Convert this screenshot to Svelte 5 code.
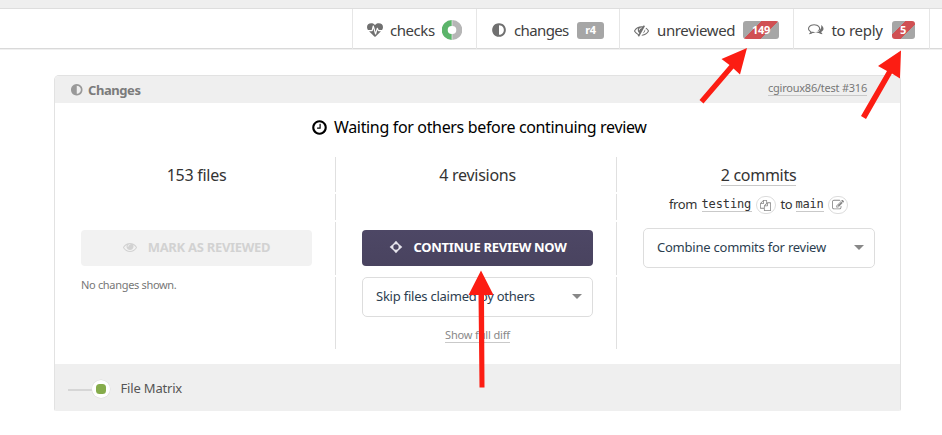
<script>
  const circle = 'M1664 896q0 209-103 385.5t-279.500 279.500-385.500 103-385.500-103-279.500-279.500-103-385.500 103-385.500 279.500-279.500 385.500-103 385.500 103 279.500 279.500 103 385.500z';
  const icons = {
    heartbeat: 'M1280 1024h305q-5 6-10 10.5t-9 7.500l-3 4-623 600q-18 18-44 18t-44-18l-624-602q-5-2-21-20h369q22 0 39.500-13.500t22.500-34.500l70-281 190 667q6 20 23 33t39 13q21 0 38-13t23-33l146-485 56 112q18 35 57 35zM1792 596q0 145-103 300h-369l-111-221q-8-17-25.500-27t-36.500-8q-45 5-56 46l-129 430-196-686q-6-20-23.500-33t-39.500-13-39 13.500-22 34.500l-116 464h-423q-103-155-103-300 0-220 127-344t351-124q62 0 126.500 21.500t120 58 95.500 68.500 76 68q36-36 76-68t95.500-68.500 120-58 126.500-21.500q224 0 351 124t127 344z',
    adjust: 'M896 1440v-1088q148 0 273 73t198 198 73 273-73 273-198 198-273 73z' + circle,
    clock: 'M1024 544v448q0 14-9 23t-23 9h-320q-14 0-23-9t-9-23v-64q0-14 9-23t23-9h224v-352q0-14 9-23t23-9h64q14 0 23 9t9 23zM1440 896q0-148-73-273t-198-198-273-73-273 73-198 198-73 273 73 273 198 198 273 73 273-73 198-198 73-273z' + circle,
    eye: 'M1664 960q-152-236-381-353 61 104 61 225 0 185-131.500 316.500t-316.500 131.500-316.500-131.500-131.500-316.500q0-121 61-225-229 117-381 353 133 205 333.500 326.500t434.500 121.500 434.500-121.500 333.500-326.500zM944 576q0-20-14-34t-34-14q-125 0-214.500 89.500t-89.500 214.500q0 20 14 34t34 14 34-14 14-34q0-86 61-147t147-61q20 0 34-14t14-34zM1792 960q0 34-20 69-140 230-376.500 368.500t-499.500 138.500-499.500-139-376.500-368q-20-35-20-69t20-69q140-229 376.500-368t499.500-139 499.500 139 376.500 368q20 35 20 69z',
    eyeSlash: 'M555 1335l78-141q-87-63-136-159t-49-203q0-121 61-225-229 117-381 353 167 258 427 375zM944 576q0-20-14-34t-34-14q-125 0-214.500 89.500t-89.500 214.500q0 20 14 34t34 14 34-14 14-34q0-86 61-147t147-61q20 0 34-14t14-34zM1307 377q0 7-1 9-106 189-316 567t-315 566l-49 89q-10 16-28 16-12 0-134-70-16-10-16-28 0-12 44-87-143-65-263.500-173t-208.500-245q-20-31-20-69t20-69q153-235 380-371t496-136q89 0 180 17l54-97q10-16 28-16 5 0 18 6t31 15.500 33 18.500 31.500 18.500 19.500 11.500q16 10 16 27zM1344 832q0 139-79 253.500t-209 164.500l280-502q8 45 8 84zM1792 960q0 35-20 69-39 64-109 145-150 172-347.500 267t-419.500 95l74-132q212-18 392.500-137t301.500-307q-115-179-282-294l63-112q95 64 182.500 153t144.500 184q20 34 20 69z',
    comments: 'M704 384q-153 0-286 52t-211.500 141-78.500 191q0 82 53 158t149 132l97 56-35 84q34-20 62-39l44-31 53 10q78 14 153 14 153 0 286-52t211.500-141 78.500-191-78.500-191-211.500-141-286-52zM704 256q191 0 353.500 68.500t256.500 186.500 94 257-94 257-256.500 186.500-353.500 68.500q-86 0-176-16-124 88-278 128-36 9-86 16h-3q-11 0-20.500-8t-11.500-21q-1-3-1-6.500t.5-6.500 2-6l2.500-5 3.500-5.500 4-5 4.500-5 4-4.500q5-6 23-25t26-29.500 22.500-29 25-38.500 20.500-44q-124-72-195-177t-71-224q0-139 94-257t256.500-186.500 353.500-68.500zM1526 1169q10 24 20.500 44t25 38.500 22.500 29 26 29.500 23 25q1 1 4 4.500t4.500 5 4 5 3.500 5.500l2.500 5 2 6 .5 6.500-1 6.500q-3 14-13 22t-22 7q-50-7-86-16-154-40-278-128-90 16-176 16-271 0-472-132 58 4 88 4 161 0 309-45t264-129q125-92 192-212t67-254q0-77-23-152 129 71 204 178t75 230q0 120-71 224.500t-195 176.500z',
    copy: 'M1696 384q40 0 68 28t28 68v1216q0 40-28 68t-68 28h-960q-40 0-68-28t-28-68v-288h-544q-40 0-68-28t-28-68v-672q0-40 20-88t48-76l408-408q28-28 76-48t88-20h416q40 0 68 28t28 68v328q68-40 128-40h416zM1152 597l-299 299h299v-299zM512 213l-299 299h299v-299zM708 860l316-316v-416h-384v416q0 40-28 68t-68 28h-416v640h512v-256q0-40 20-88t48-76zM1664 1664v-1152h-384v416q0 40-28 68t-68 28h-416v640h896z',
    edit: 'M888 1184l116-116-152-152-116 116v56h96v96h56zM1328 464q-16-16-33 1l-350 350q-17 17-1 33t33-1l350-350q17-17 1-33zM1408 1058v190q0 119-84.500 203.500t-203.500 84.500h-832q-119 0-203.500-84.500t-84.500-203.500v-832q0-119 84.500-203.500t203.500-84.500h832q63 0 117 25 15 7 18 23 3 17-9 29l-49 49q-14 14-32 8-23-6-45-6h-832q-66 0-113 47t-47 113v832q0 66 47 113t113 47h832q66 0 113-47t47-113v-126q0-13 9-22l64-64q15-15 35-7t20 29zM1312 320l288 288-672 672h-288v-288zM1756 452l-92 92-288-288 92-92q28-28 68-28t68 28l152 152q28 28 28 68t-28 68z'
  };
  const arrows = [
    '747,48 740,74.500 733.500,68.500 703.500,103.500 699.500,100 729.500,65 721.500,59',
    '901,50.500 900,78.500 892,73.500 866,119 861,116 887,71 878,66',
    '481,270.500 493.500,295 484,295 484.500,387.500 479.500,387.500 478.500,295 468.500,295'
  ];
</script>

{#snippet icon(name, size)}
  <svg class="icon" width={size} height={size} viewBox="0 0 1792 1792"><path fill-rule="evenodd" d={icons[name]} /></svg>
{/snippet}

<div class="page">
  <div class="strip"></div>
  <nav>
    <div class="tab checks">
      {@render icon('heartbeat', 16)}<span class="label">checks</span>
      <svg class="donut" width="20" height="20" viewBox="0 0 20 20">
        <path fill="#5bb46a" d="M9.700 0A10 10 0 0 0 9.700 20V14A4 4 0 0 1 9.700 6z" />
        <path fill="#b6b6b6" d="M10.300 0A10 10 0 0 1 10.300 20V14A4 4 0 0 0 10.300 6z" />
      </svg>
    </div>
    <div class="tab changes">{@render icon('adjust', 16)}<span class="label">changes</span><span class="badge">r4</span></div>
    <div class="tab unreviewed">{@render icon('eyeSlash', 15)}<span class="label">unreviewed</span><span class="badge split">149</span></div>
    <div class="tab reply">{@render icon('comments', 15.5)}<span class="label">to reply</span><span class="badge split">5</span></div>
    <div class="tab end"></div>
  </nav>

  <section class="panel">
    <header>
      <div class="title">{@render icon('adjust', 13.5)}<b>Changes</b></div>
      <span class="link repo">cgiroux86/test #316</span>
    </header>
    <div class="status">{@render icon('clock', 17)}<span>Waiting for others before continuing review</span></div>
    <div class="grid">
      <div class="cell head"><span>153 files</span></div>
      <div class="cell head"><span>4 revisions</span></div>
      <div class="cell head"><span class="link">2 commits</span></div>

      <div class="cell"></div>
      <div class="cell"></div>
      <div class="cell branches">
        <span class="from">from</span><span class="link mono">testing</span><span class="pill">{@render icon('copy', 11)}</span>
        <span class="to">to</span><span class="link mono main">main</span><span class="pill">{@render icon('edit', 12)}</span>
      </div>

      <div class="cell action"><div class="button off">{@render icon('eye', 14)}<span>MARK AS REVIEWED</span></div></div>
      <div class="cell action">
        <div class="button">
          <svg class="icon" width="14" height="14" viewBox="0 0 14 14">
            <circle cx="7" cy="7" r="3.500" fill="none" stroke="currentColor" stroke-width="1.700" />
            <path d="M7 .7L9.200 3.300H4.800zM7 13.300L9.200 10.700H4.800zM.7 7L3.300 4.800V9.200zM13.300 7L10.700 4.800V9.200z" />
          </svg><span>CONTINUE REVIEW NOW</span>
        </div>
      </div>
      <div class="cell action combine"><div class="select"><span>Combine commits for review</span><i></i></div></div>

      <div class="cell last"><div class="note">No changes shown.</div></div>
      <div class="cell last">
        <div class="select"><span>Skip files claimed by others</span><i></i></div>
        <div class="diff"><span class="link">Show full diff</span></div>
      </div>
      <div class="cell last"></div>
    </div>
    <footer><span class="line"></span><span class="node"></span><span class="matrix">File Matrix</span></footer>
  </section>

  <svg class="arrows" width="942" height="435" viewBox="0 0 942 435">
    {#each arrows as points}<polygon {points} />{/each}
  </svg>
</div>

<style>
  :global(body) { margin: 0; background: #fff; }
  .page { position: relative; box-sizing: border-box; width: 942px; height: 435px; overflow: hidden; background: #fff; font-family: "Noto Sans", sans-serif; color: #333; white-space: nowrap; }
  .page *, .page *::before { box-sizing: border-box; }
  .icon { flex: none; display: block; fill: currentColor; }
  .strip { height: 9px; background: #efefef; border-bottom: 1px solid #dedede; }
  nav { display: flex; height: 40px; padding-left: 352px; border-bottom: 1px solid #d9d9d9; box-shadow: 0 1px 0 #f0f0f0; }
  .tab { display: flex; flex: none; align-items: center; height: 40px; border-left: 1px solid #e6e6e6; padding: 2px 0 0 14px; color: #707070; font-size: 15px; line-height: 20px; }
  .label { color: #404040; margin-left: 7px; }
  .checks { width: 124px; }
  .checks .label { letter-spacing: -0.45px; width: 45px; }
  .donut { margin-left: 7px; }
  .changes { width: 143px; }
  .changes .label { letter-spacing: -0.62px; width: 55px; }
  .unreviewed { width: 174px; }
  .unreviewed .label { letter-spacing: -0.36px; width: 79px; margin-left: 8px; }
  .reply { width: 136px; }
  .reply .label { letter-spacing: -0.3px; width: 52px; margin-left: 8px; }
  .end { width: 13px; padding: 0; }
  .badge { display: flex; align-items: center; justify-content: center; width: 27px; height: 17px; margin-left: 8px; border-radius: 3px; background: #a6a6a6; color: #fff; font-size: 11px; font-weight: 700; letter-spacing: -0.3px; }
  .unreviewed .badge { width: 36px; height: 18px; margin-left: 7px; }
  .reply .badge { width: 23px; height: 18px; margin-left: 8px; }
  .split { background: linear-gradient(135deg, #a6a6a6 33.5%, #d05053 34%, #d05053 65%, #a6a6a6 65.500%); }
  .panel { width: 847px; height: 336px; margin: 26px 0 0 54px; border: 1px solid #e2e2e2; border-bottom: 0; border-radius: 5px 5px 2px 2px; overflow: hidden; }
  header { display: flex; align-items: center; justify-content: space-between; height: 27px; padding: 0 33px 0 14.5px; background: #efefef; color: #999; }
  .title { display: flex; align-items: center; }
  .title b { margin-left: 5px; color: #7b7b7b; font-size: 13px; letter-spacing: -0.43px; }
  .link { border-bottom: 1px solid #c9c9c9; }
  .repo { margin-bottom: 2px; font-size: 11px; line-height: 14px; letter-spacing: -0.23px; color: #777; }
  .status { display: flex; align-items: center; height: 54px; padding: 0 0 6px 256px; color: #000; font-size: 16px; letter-spacing: -0.34px; }
  .status .icon { margin-top: 1px; }
  .status span { margin-left: 6px; }
  .grid { display: grid; grid-template-columns: 281px 281px 281px; grid-template-rows: 35px 26px 53px 72px; row-gap: 2px; height: 207px; }
  .cell { border-right: 1px solid #e0e0e0; padding: 0 23px 0 26px; }
  .cell:nth-child(3n) { border-right-color: transparent; }
  .head { display: flex; justify-content: center; align-items: flex-start; padding-top: 8px; font-size: 16px; line-height: 20px; letter-spacing: -0.27px; }
  .branches { display: flex; align-items: center; font-size: 13px; line-height: 15px; letter-spacing: -0.4px; padding: 0 0 6px 26px; }
  .from { margin-left: 26px; width: 32.5px; }
  .to { margin-left: 5px; width: 15px; }
  .mono { font-family: "DejaVu Sans Mono", monospace; font-size: 12px; letter-spacing: -0.13px; line-height: 14px; width: 50px; margin-top: 1px; }
  .main { letter-spacing: -0.22px; width: 28px; }
  .pill { display: flex; align-items: center; justify-content: center; width: 20px; height: 18px; margin: 2px 0 0 4px; border: 1px solid #dcdcdc; border-radius: 9px; color: #888; }
  .action { padding-top: 8px; }
  .combine { padding-top: 6px; }
  .button { display: flex; align-items: center; justify-content: center; width: 231px; height: 36px; border-radius: 4px; background: linear-gradient(#4d4765, #49435f); color: #fff; font-size: 13px; font-weight: 700; letter-spacing: -0.29px; padding-bottom: 3px; }
  .button .icon { color: #e6e4ec; }
  .button span { margin-left: 11px; }
  .button.off { background: #f2f2f2; color: #d2d2d2; }
  .button.off .icon { color: #d2d2d2; }
  .select { display: flex; align-items: center; justify-content: space-between; width: 231px; height: 40px; border: 1px solid #ddd; border-radius: 5px; padding: 0 10px 2px 13px; color: #2c3e50; font-size: 13px; letter-spacing: -0.23px; }
  .combine .select { width: 232px; }
  .select i { border: 5px solid transparent; border-top-color: #888; border-bottom: 0; }
  .note { font-size: 11px; line-height: 16px; letter-spacing: -0.32px; color: #777; }
  .diff { display: flex; justify-content: center; padding-top: 11px; font-size: 11px; line-height: 14px; letter-spacing: -0.15px; color: #888; }
  footer { display: flex; align-items: center; height: 47px; padding: 2px 0 0 13px; background: #efefef; }
  .line { width: 24px; height: 2px; background: #d6d6d6; margin-top: 2px; }
  .node { display: flex; align-items: center; justify-content: center; width: 18px; height: 18px; border-radius: 9px; background: #fff; box-shadow: 0 0 0 .5px #ddd; }
  .node::before { content: ""; width: 10px; height: 10px; border-radius: 3.500px; background: #86ac4c; }
  .matrix { margin-left: 10.5px; font-size: 13px; letter-spacing: -0.18px; color: #555; margin-bottom: 2px; }
  .arrows { position: absolute; left: 0; top: 0; fill: #fc1d13; pointer-events: none; }
</style>
